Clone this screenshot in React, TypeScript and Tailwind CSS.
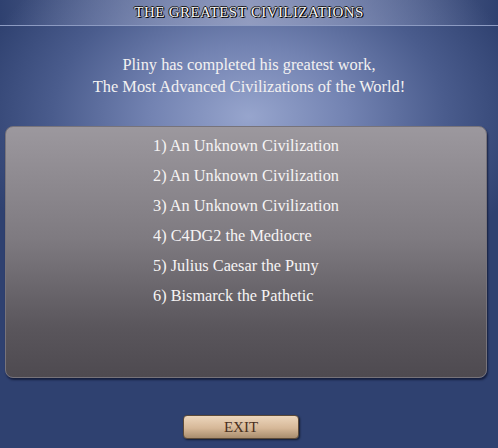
const rankings = [
  '1) An Unknown Civilization',
  '2) An Unknown Civilization',
  '3) An Unknown Civilization',
  '4) C4DG2 the Mediocre',
  '5) Julius Caesar the Puny',
  '6) Bismarck the Pathetic',
]

export default function App() {
  return (
    <div
      className="relative w-[498px] h-[448px] overflow-hidden bg-[radial-gradient(ellipse_280px_200px_at_50%_26%,#97a5cd_0%,#7383b2_35%,#4a5c8d_70%,#2f4170_100%)]"
      style={{ fontFamily: "'Liberation Serif', 'DejaVu Serif', serif" }}
    >
      {/* title bar */}
      <div className="h-[26px] flex items-center justify-center border-b border-[#8d9bc2] bg-[linear-gradient(to_right,rgba(90,100,140,0)_0%,rgba(145,155,190,0.6)_30%,rgba(160,168,200,0.75)_50%,rgba(145,155,190,0.6)_70%,rgba(90,100,140,0)_100%)]">
        <h1 className="text-[15px] tracking-[0.4px] text-[#f6f4f4] [text-shadow:1px_1px_0_#000,-1px_0_0_#1a1a1a,0_-1px_0_#1a1a1a,1px_0_0_#1a1a1a]">
          THE GREATEST CIVILIZATIONS
        </h1>
      </div>

      {/* intro */}
      <div className="mt-[28px] text-center text-[16.4px] leading-[22px] text-[#f3f1f1]">
        <p>Pliny has completed his greatest work,</p>
        <p>The Most Advanced Civilizations of the World!</p>
      </div>

      {/* rankings panel */}
      <div className="mt-[28px] ml-[5px] w-[482px] h-[252px] rounded-[8px] border border-[#77737a] bg-[linear-gradient(to_bottom,#9c989e_0%,#7e7a80_45%,#5a565c_80%,#4e4a50_100%)] shadow-[1px_2px_2px_rgba(10,15,40,0.7)] flex justify-center pt-[4px]">
        <ul className="w-fit text-[16.3px] leading-[30px] text-[#f6f4f4]">
          {rankings.map(r => (
            <li key={r}>{r}</li>
          ))}
        </ul>
      </div>

      {/* exit button */}
      <button className="mt-[37px] ml-[183px] w-[116px] h-[24px] rounded-[4px] border border-[#5c4a38] bg-[linear-gradient(to_bottom,#ecd6bc_0%,#d6b898_55%,#a98d6e_100%)] shadow-[1px_1px_2px_rgba(0,0,0,0.6)] text-[15px] leading-[22px] text-[#4a3020]">
        EXIT
      </button>
    </div>
  )
}
